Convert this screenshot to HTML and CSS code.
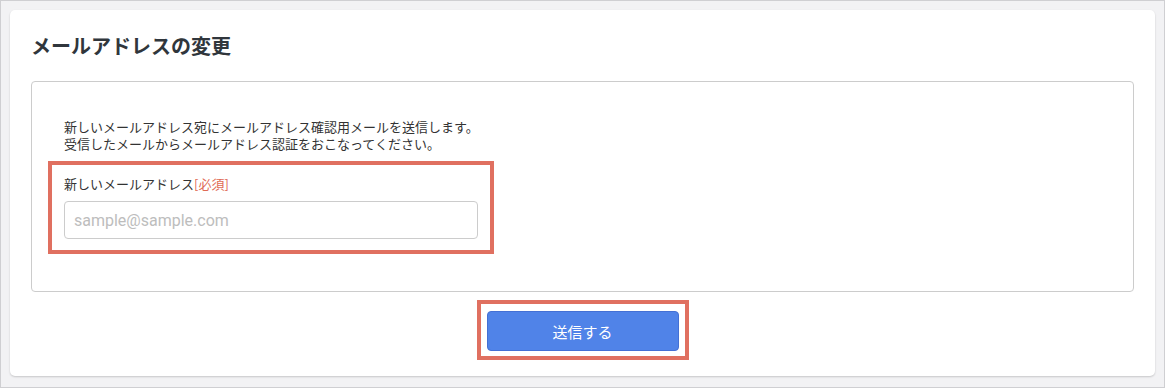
FILE: index.html
```html
<!DOCTYPE html>
<html lang="ja">
<head>
  <meta charset="UTF-8">
  <meta name="viewport" content="width=device-width, initial-scale=1.0">
  <title>メールアドレスの変更</title>
  <link rel="stylesheet" href="styles.css">
</head>
<body>
  <div class="card">
    <h1>メールアドレスの変更</h1>

    <div class="form-box">
      <p class="lead">
        新しいメールアドレス宛にメールアドレス確認用メールを送信します。<br>
        受信したメールからメールアドレス認証をおこなってください。
      </p>

      <div class="mark field">
        <label for="email">新しいメールアドレス<span class="req">[必須]</span></label>
        <input type="email" id="email" placeholder="sample@sample.com">
      </div>
    </div>

    <div class="actions">
      <div class="mark mark-btn">
        <button type="button">送信する</button>
      </div>
    </div>
  </div>
</body>
</html>
```

FILE: styles.css
```css
/* General Styles */
html, body {
  height: 100%;
}
body {
  margin: 0;
  box-sizing: border-box;
  padding: 9px;
  border: 1px solid #cfcfd2;
  background-color: #f2f2f4;
  font-family: "Noto Sans CJK JP", "Liberation Sans", sans-serif;
  color: #333;
}
.card {
  background: #ffffff;
  border-radius: 5px;
  box-shadow: 0 1px 2px rgba(0, 0, 0, 0.18);
  padding: 24px 21px 16px;
}
h1 {
  margin: 0 0 23px;
  font-size: 20px;
  line-height: 24px;
  font-weight: bold;
  color: #30363c;
}
.form-box {
  border: 1px solid #cccccc;
  border-radius: 4px;
  padding: 36px 16px 37px;
}
.lead {
  margin: 0 0 9px;
  padding: 0 16px;
  font-size: 13px;
  line-height: 17px;
}

/* red highlight frames */
.mark {
  border: 4px solid #e07060;
}
.field {
  box-sizing: border-box;
  width: 446px;
  padding: 10px 12px 11px;
}
.field label {
  display: block;
  font-size: 13px;
  line-height: 17px;
  margin-bottom: 9px;
}
.req {
  color: #df6a55;
}
input {
  display: block;
  box-sizing: border-box;
  width: 414px;
  height: 38px;
  padding: 0 9px;
  border: 1px solid #cccccc;
  border-radius: 4px;
  font-family: Roboto, "Liberation Sans", sans-serif;
  font-size: 16px;
  color: #333;
}
input::placeholder {
  color: #bdbdbd;
}
input:focus {
  outline: none;
  border-color: #5083e8;
}

.actions {
  display: flex;
  justify-content: center;
  margin-top: 8px;
}
.mark-btn {
  padding: 7px 6px 5px;
}
button {
  display: block;
  width: 192px;
  height: 40px;
  background-color: #5083e8;
  border: 1px solid #4470d4;
  border-radius: 4px;
  color: #ffffff;
  font-family: "Noto Sans CJK JP", sans-serif;
  font-size: 15px;
  cursor: pointer;
}
button:hover {
  background-color: #4677de;
}
```
